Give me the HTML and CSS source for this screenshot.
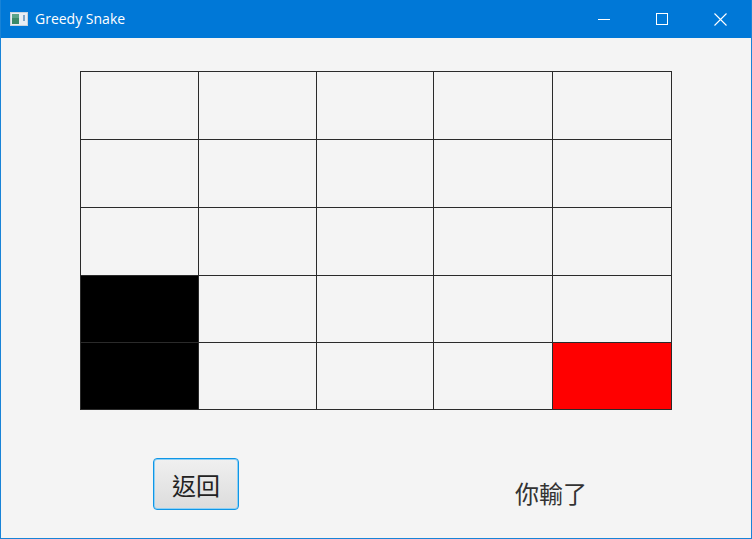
FILE: index.html
```html
<!DOCTYPE html>
<html>
<head>
<meta charset="utf-8">
<link rel="stylesheet" href="styles.css">
</head>
<body>
<div class="window">
  <div class="titlebar">
    <svg class="app-icon" width="18" height="14" viewBox="0 0 18 14">
      <rect x="0.5" y="0.5" width="17" height="13" fill="#e8eef4" stroke="#c9d3dc"/>
      <rect x="2" y="2" width="7" height="10" fill="#3b8a6a"/>
      <rect x="2" y="2" width="7" height="4" fill="#5aa48a"/>
      <rect x="13" y="3" width="2" height="6" fill="#7ea6c9"/>
    </svg>
    <span class="title">Greedy Snake</span>
    <div class="controls">
      <div class="ctl"><svg width="12" height="12" viewBox="0 0 12 12"><line x1="0" y1="6.5" x2="12" y2="6.5" stroke="#fff" stroke-width="1"/></svg></div>
      <div class="ctl"><svg width="12" height="12" viewBox="0 0 12 12"><rect x="0.5" y="0.5" width="11" height="11" fill="none" stroke="#fff" stroke-width="1"/></svg></div>
      <div class="ctl"><svg width="13" height="13" viewBox="0 0 13 13"><path d="M0.5 0.5 L12.5 12.5 M12.5 0.5 L0.5 12.5" stroke="#fff" stroke-width="1.1"/></svg></div>
    </div>
  </div>
  <div class="content">
    <div class="board">
      <div class="cell"></div><div class="cell"></div><div class="cell"></div><div class="cell"></div><div class="cell"></div>
      <div class="cell"></div><div class="cell"></div><div class="cell"></div><div class="cell"></div><div class="cell"></div>
      <div class="cell"></div><div class="cell"></div><div class="cell"></div><div class="cell"></div><div class="cell"></div>
      <div class="cell snake"></div><div class="cell"></div><div class="cell"></div><div class="cell"></div><div class="cell"></div>
      <div class="cell snake"></div><div class="cell"></div><div class="cell"></div><div class="cell"></div><div class="cell food"></div>
    </div>
    <div class="footer">
      <button class="back">返回</button>
      <span class="status">你輸了</span>
    </div>
  </div>
</div>
</body>
</html>
```
FILE: styles.css
```css
html, body {
  margin: 0;
  padding: 0;
  background: #f4f4f4;
}
.window {
  width: 752px;
  height: 539px;
  box-sizing: border-box;
  border: 1px solid #1883d7;
  border-top: none;
  background: #f4f4f4;
  display: flex;
  flex-direction: column;
  overflow: hidden;
}
.titlebar {
  height: 38px;
  margin: 0 -1px;
  background: #0078d7;
  display: flex;
  align-items: center;
  color: #fff;
  font-family: "Open Sans", "Noto Sans", sans-serif;
  font-size: 14px;
}
.app-icon {
  margin-left: 10px;
}
.title {
  margin-left: 7px;
  margin-top: -1px;
}
.controls {
  margin-left: auto;
  margin-right: 3px;
  display: flex;
  height: 100%;
}
.ctl {
  width: 58px;
  display: flex;
  align-items: center;
  justify-content: center;
}
.content {
  flex: 1;
  padding: 33px 0 0 79px;
}
.board {
  width: 592px;
  height: 339px;
  box-sizing: border-box;
  display: grid;
  grid-template-columns: 119px 118px 117px 119px 119px;
  grid-template-rows: 69px 68px 68px 67px 67px;
}
.cell {
  border-right: 1px solid #2a2a2a;
  border-bottom: 1px solid #2a2a2a;
  background: #f4f4f4;
}
.cell:nth-child(5n+1) {
  border-left: 1px solid #2a2a2a;
}
.cell:nth-child(-n+5) {
  border-top: 1px solid #2a2a2a;
}
.cell.snake { background: #000; }
.cell.food { background: #ff0000; }
.footer {
  display: flex;
  align-items: center;
  margin-top: 48px;
  padding-left: 73px;
}
.back {
  width: 86px;
  height: 52px;
  box-sizing: border-box;
  border: 1px solid #0f96e6;
  border-radius: 4px;
  box-shadow: inset 0 0 0 1px #8fd0f4;
  background: linear-gradient(#f0f0f0, #dcdcdc);
  font-family: "Noto Sans CJK TC", sans-serif;
  font-size: 24px;
  color: #222;
  padding: 0;
}
.status {
  margin-left: 276px;
  margin-top: 16px;
  font-family: "Noto Sans CJK TC", sans-serif;
  font-size: 24px;
  color: #333;
}
```
